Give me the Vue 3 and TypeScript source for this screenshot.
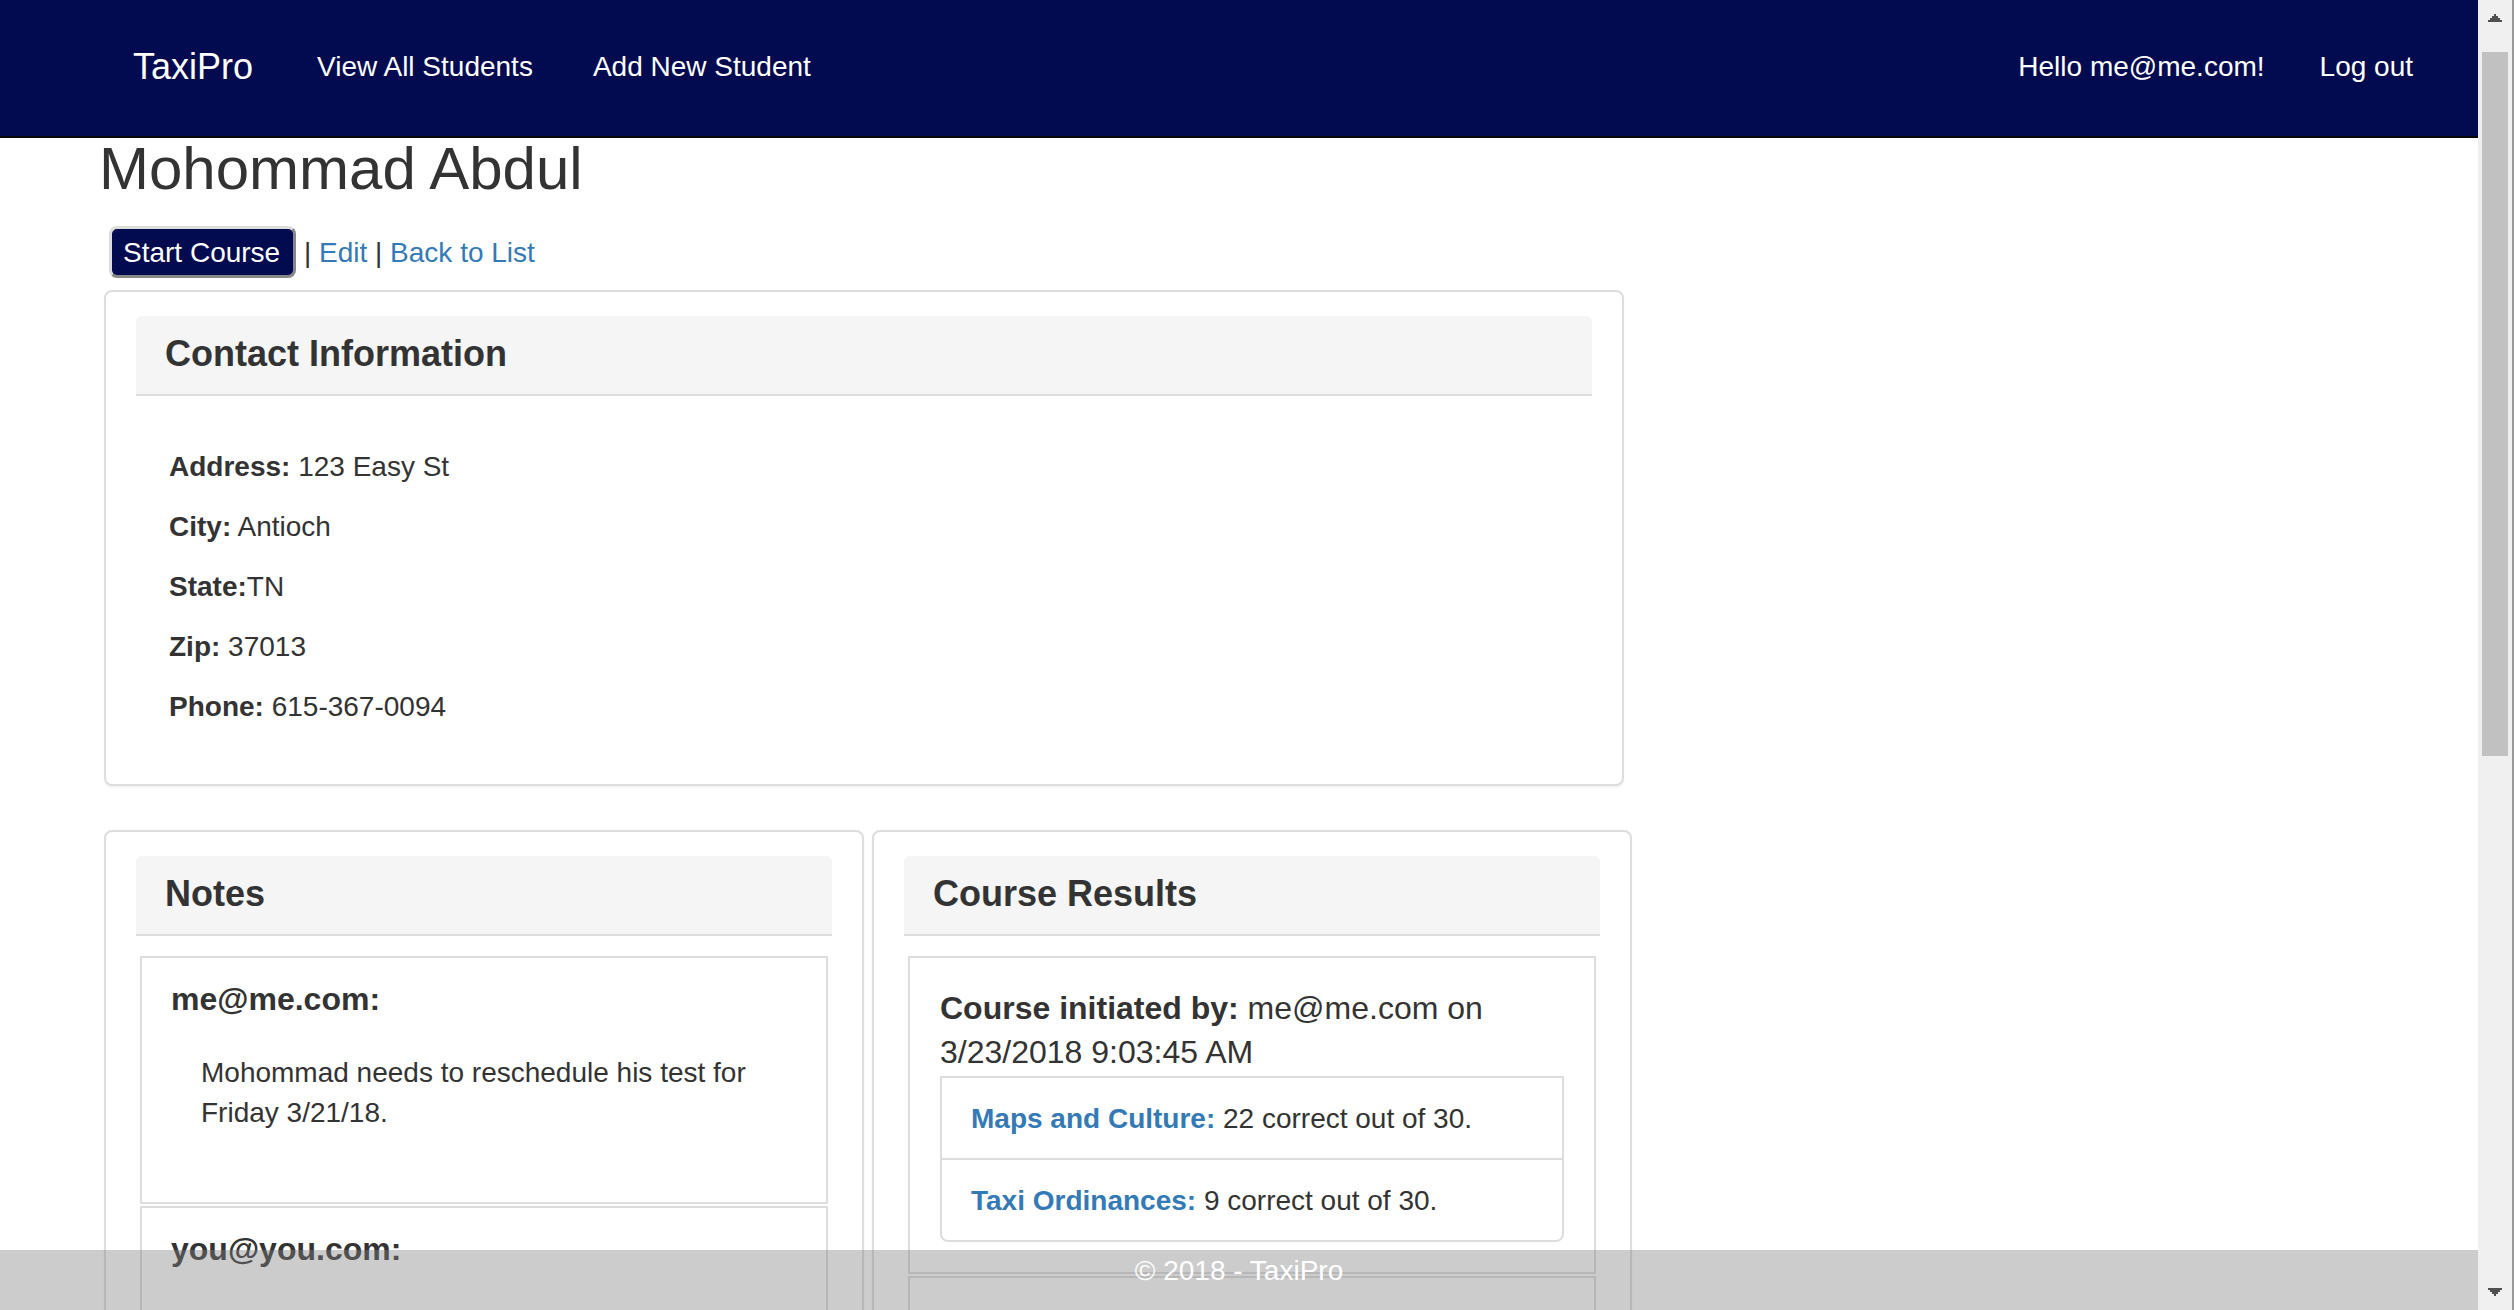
<script setup lang="ts">
interface Field {
  label: string
  value: string
}

interface Note {
  author: string
  text: string
}

interface Score {
  subject: string
  correct: number
  total: number
}

interface Course {
  startedBy: string
  startedOn: string
  scores: Score[]
}

const contact: Field[] = [
  { label: 'Address:', value: ' 123 Easy St' },
  { label: 'City:', value: ' Antioch' },
  { label: 'State:', value: 'TN' },
  { label: 'Zip:', value: ' 37013' },
  { label: 'Phone:', value: ' 615-367-0094' },
]

const notes: Note[] = [
  { author: 'me@me.com:', text: 'Mohommad needs to reschedule his test for Friday 3/21/18.' },
  { author: 'you@you.com:', text: '' },
]

const courses: Course[] = [
  {
    startedBy: 'me@me.com',
    startedOn: '3/23/2018 9:03:45 AM',
    scores: [
      { subject: 'Maps and Culture:', correct: 22, total: 30 },
      { subject: 'Taxi Ordinances:', correct: 9, total: 30 },
    ],
  },
]
</script>

<template>
  <div class="shell">
    <div class="page">
      <nav class="navbar">
        <a class="brand" href="#">TaxiPro</a>
        <div class="links">
          <a href="#">View All Students</a>
          <a href="#">Add New Student</a>
        </div>
        <div class="account">
          <a href="#">Hello me@me.com!</a>
          <button type="button" class="logout">Log out</button>
        </div>
      </nav>

      <main class="content">
        <h2 class="name">Mohommad Abdul</h2>
        <div class="actions">
          <button type="button" class="start">Start Course</button> |
          <a href="#">Edit</a> |
          <a href="#">Back to List</a>
        </div>

        <section class="panel contact">
          <h3 class="heading">Contact Information</h3>
          <div class="fields">
            <p v-for="field in contact" :key="field.label"><strong>{{ field.label }}</strong>{{ field.value }}</p>
          </div>
        </section>

        <div class="columns">
          <section class="panel">
            <h3 class="heading">Notes</h3>
            <div class="boxes">
              <article v-for="note in notes" :key="note.author" class="box note">
                <h4>{{ note.author }}</h4>
                <p>{{ note.text }}</p>
              </article>
            </div>
          </section>

          <section class="panel">
            <h3 class="heading">Course Results</h3>
            <div class="boxes">
              <article v-for="course in courses" :key="course.startedOn" class="box course">
                <p class="started">
                  <strong>Course initiated by:</strong> <span>{{ course.startedBy }} on</span> <time>{{ course.startedOn }}</time>
                </p>
                <ul class="scores">
                  <li v-for="score in course.scores" :key="score.subject">
                    <a href="#">{{ score.subject }}</a> {{ score.correct }} correct out of {{ score.total }}.
                  </li>
                </ul>
              </article>
              <article class="box course"></article>
            </div>
          </section>
        </div>
      </main>

      <footer class="footer">© 2018 - TaxiPro</footer>
    </div>

    <div class="scrollbar" aria-hidden="true">
      <svg class="arrow" viewBox="0 0 14 8" shape-rendering="crispEdges">
        <path d="M6 0h2v2h2v2h2v2h2v2H0V6h2V4h2V2h2z" />
      </svg>
      <div class="track"><div class="thumb"></div></div>
      <svg class="arrow" viewBox="0 0 14 8" shape-rendering="crispEdges">
        <path d="M0 0h14v2h-2v2h-2v2H8v2H6V6H4V4H2V2H0z" />
      </svg>
    </div>
  </div>
</template>

<style>
body {
  margin: 0;
  background: #fff;
}
</style>

<style scoped>
.shell {
  display: flex;
  height: 100vh;
  font-family: "Liberation Sans", Arial, sans-serif;
  font-size: 28px;
  line-height: 40px;
  color: #333;
}

.shell *,
.shell {
  box-sizing: border-box;
}

.page {
  position: relative;
  flex: 1;
  min-width: 0;
  overflow: hidden;
}

a {
  color: #337ab7;
  text-decoration: none;
}

h2,
h3,
h4,
p,
ul {
  margin: 0;
  padding: 0;
}

button {
  font: inherit;
  color: #fff;
  cursor: pointer;
}

.navbar {
  display: flex;
  align-items: center;
  gap: 64px;
  padding: 47px 65px 49px 133px;
  background: #020a50;
  border-bottom: 2px solid #080808;
}

.navbar a {
  color: #fff;
}

.navbar .brand {
  font-size: 36px;
}

.links,
.account {
  display: flex;
  gap: 60px;
}

.account {
  gap: 55px;
  margin-left: auto;
}

.logout {
  padding: 0;
  border: 0;
  background: none;
}

.content {
  max-width: 1632px;
  padding-left: 104px;
}

.name {
  margin-left: -5px;
  font-size: 60px;
  font-weight: 400;
  line-height: 62px;
}

.actions {
  margin: 26px 0 12px 5px;
}

.start {
  padding: 4px 13px 2px 11px;
  border: 3px solid;
  border-color: #ddd #888 #888 #ddd;
  border-radius: 8px;
  background: #020a50;
}

.panel {
  flex: 1;
  padding: 24px 30px 0;
  border: 2px solid #ddd;
  border-radius: 8px;
  box-shadow: 0 2px 2px rgba(0, 0, 0, 0.05);
}

.contact {
  margin: 0 8px 44px 0;
}

.heading {
  padding: 18px 29px 20px;
  background: #f5f5f5;
  border-bottom: 2px solid #ddd;
  border-radius: 6px 6px 0 0;
  font-size: 36px;
  line-height: 40px;
}

.fields {
  display: flex;
  flex-direction: column;
  gap: 20px;
  padding: 51px 33px 57px;
}

.fields p {
  white-space: pre-wrap;
}

.columns {
  display: flex;
  gap: 8px;
}

.boxes {
  display: flex;
  flex-direction: column;
  gap: 2px;
  padding: 20px 4px 40px;
}

.box {
  padding: 28px 30px 30px;
  border: 2px solid #ddd;
}

.note {
  min-height: 248px;
  padding: 23px 29px;
}

.note h4 {
  font-size: 32px;
  line-height: 36px;
}

.note p {
  padding: 36px 30px;
}

.course {
  min-height: 248px;
}

.started {
  padding-bottom: 2px;
  font-size: 32px;
  line-height: 44px;
}

.scores {
  list-style: none;
  border: 2px solid #ddd;
  border-radius: 0 0 8px 8px;
}

.scores li {
  padding: 21px 29px 19px;
}

.scores li + li {
  border-top: 2px solid #ddd;
}

.scores a {
  font-weight: 700;
}

.footer {
  position: absolute;
  right: 0;
  bottom: 0;
  left: 0;
  height: 60px;
  padding-top: 1px;
  background: rgba(128, 128, 128, 0.4);
  color: #fff;
  text-align: center;
}

.scrollbar {
  display: flex;
  flex-direction: column;
  align-items: center;
  width: 36px;
  padding: 14px 0;
  background: #f0f0f0;
  border-right: 2px solid #999;
}

.arrow {
  width: 14px;
  height: 8px;
  fill: #505050;
}

.track {
  display: flex;
  flex: 1;
  flex-direction: column;
  width: 26px;
  margin: 30px 0;
}

.track::after {
  content: "";
  flex: 5;
}

.thumb {
  flex: 7;
  background: #c1c1c1;
}
</style>
